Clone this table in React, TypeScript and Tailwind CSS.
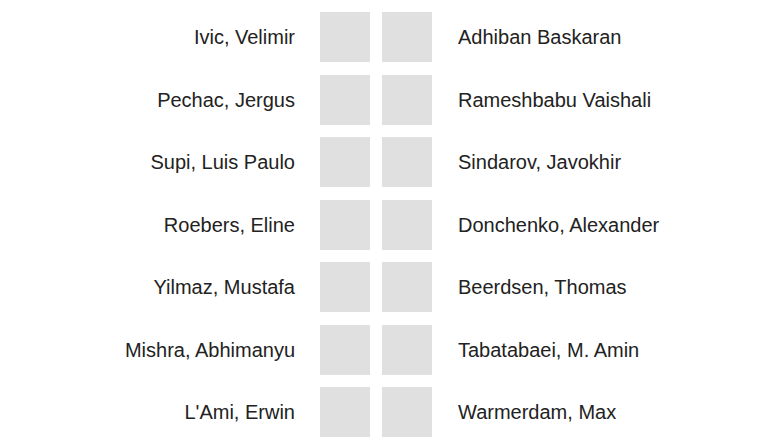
const rows: [string, string][] = [
  ['Ivic, Velimir', 'Adhiban Baskaran'],
  ['Pechac, Jergus', 'Rameshbabu Vaishali'],
  ['Supi, Luis Paulo', 'Sindarov, Javokhir'],
  ['Roebers, Eline', 'Donchenko, Alexander'],
  ['Yilmaz, Mustafa', 'Beerdsen, Thomas'],
  ['Mishra, Abhimanyu', 'Tabatabaei, M. Amin'],
  ["L'Ami, Erwin", 'Warmerdam, Max'],
];

export default function App() {
  return (
    <div className="w-[769px] h-[442px] overflow-hidden bg-white font-['Liberation_Sans',Arial,sans-serif] text-[20px] text-[#222]">
      <div className="flex flex-col gap-[12.5px] pt-[12px]">
        {rows.map(([white, black]) => (
          <div key={white} className="flex items-center h-[50px]">
            <div className="w-[295px] text-right whitespace-nowrap">{white}</div>
            <div className="ml-[25px] w-[50px] h-[50px] bg-[#e0e0e0]" />
            <div className="ml-[12px] w-[50px] h-[50px] bg-[#e0e0e0]" />
            <div className="ml-[26px] whitespace-nowrap">{black}</div>
          </div>
        ))}
      </div>
    </div>
  );
}
